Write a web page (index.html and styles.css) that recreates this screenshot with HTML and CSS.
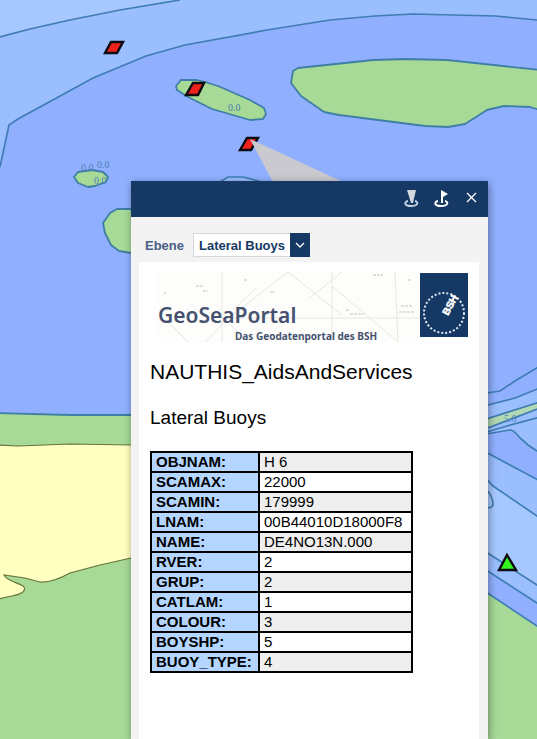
FILE: index.html
```html
<!DOCTYPE html>
<html lang="de">
<head>
    <meta charset="UTF-8">
    <meta name="viewport" content="width=device-width, initial-scale=1.0">
    <title>GeoSeaPortal</title>
    <link rel="stylesheet" href="styles.css">
</head>
<body>
    <main class="map">
        <svg class="chart" viewBox="0 0 537 739" preserveAspectRatio="xMinYMin slice" aria-hidden="true">
            <!-- depth areas -->
            <rect class="deep" width="537" height="739"/>
            <path class="medium" d="M0 0H537V20L495 16L413 14L375 16L330 20L267 30L185 45L146 56L93 78L18 119L9 125L0 167Z"/>
            <path class="shallow" d="M0 0H180L120 10L70 20L30 29L0 37Z"/>
            <path class="line" d="M180 0L120 10L70 20L30 29L0 37"/>
            <path class="line" d="M537 20L495 16L413 14L375 16L330 20L267 30L185 45L146 56L93 78L18 119L9 125L0 167"/>

            <!-- drying areas -->
            <path class="drying" d="M176 86L181 80L197 80L205 82L218 86L250 100L264 108L266 114L263 119L250 120L212 109L188 97L177 90Z"/>
            <path class="drying" d="M291 83L293 71L298 68L373 60L405 59L447 60L540 70V110L530 107L504 106L487 110L465 124L448 127L425 126L339 115L324 112L301 96Z"/>
            <path class="drying" d="M74 177L78 172L92 170L103 172L108 177L106 182L95 186L88 187L78 183Z"/>
            <path class="drying" d="M140 209H117L110 213L103 223L105 233L111 245L119 251L131 253H140Z"/>
            <path class="medium line" d="M220 182L228 177L243 177L262 182"/>
            <path class="drying" d="M-2 413L70 415H200V745H-2Z"/>

            <!-- land -->
            <path class="land" d="M-2 445L18 446L70 444L131 445H140V556L131 558L100 565L70 573Q52 583 40 582L25 578L4 575C7 582 22 583 24 587Q27 593 12 596L-2 599Z"/>

            <!-- channel -->
            <path class="medium" d="M480 406L515 398L537 389V452L528 445L512 430L480 434Z"/>
            <path class="medium" d="M480 449L537 480V603L480 566Z"/>
            <path class="shallow" d="M480 473L493 486L537 517V585L480 548Z"/>
            <path class="drying-fill" d="M480 588L537 626V739H480Z"/>
            <path class="fairway" d="M480 421L540 402V408L480 431Z"/>
            <path class="line" d="M480 394L500 391L515 381L540 366M480 407L515 398L540 388M480 421L540 402M480 431L540 408M480 434L507 426L540 417M480 435L510 430Q514 430 520 438L528 445L540 453"/>
            <path class="line" d="M480 449L540 481M480 472L493 486L540 518M486 489Q493 496 493 505Q492 508 486 508M480 548L540 587M480 566L540 605M480 588L540 628"/>

            <g class="sounding">
                <text x="228" y="111">0.0</text>
                <text x="81" y="171">0.0</text>
                <text x="97" y="168">0.0</text>
                <text x="94" y="184">0.0</text>
                <text x="504" y="422">5.0</text>
            </g>

            <!-- buoys -->
            <path class="buoy" d="M105 53L111 42H123L117 53Z"/>
            <path class="buoy" d="M186 95L193 83H204L198 95Z"/>
            <path class="buoy" d="M240 150L247 138H258L251 150Z"/>
            <path class="buoy buoy-green" d="M507 555L516 570H499Z"/>

            <path class="callout" d="M250 139L343 182H273Z"/>
        </svg>

        <section class="popup">
            <header class="popup-header">
                <button class="icon-btn" type="button" aria-label="Pin">
                    <svg width="16" height="20" viewBox="0 0 16 20">
                        <path class="pin" d="M4 1H13L10 14H8Z"/>
                        <path class="ring pin-ring" d="M5 12C1 13 1 17 8 17S16 13 12 12"/>
                    </svg>
                </button>
                <button class="icon-btn" type="button" aria-label="Flag">
                    <svg width="16" height="20" viewBox="0 0 16 20">
                        <path class="flag" d="M8 1L15 5L10 8V14H8Z"/>
                        <path class="ring" d="M5 12C1 13 1 17 8 17S16 13 12 12"/>
                    </svg>
                </button>
                <button class="icon-btn" type="button" aria-label="Close">
                    <svg width="16" height="20" viewBox="0 0 16 20">
                        <path class="cross" d="M4 4L13 13M13 4L4 13"/>
                    </svg>
                </button>
            </header>

            <div class="layer-row">
                <label for="layer">Ebene</label>
                <div class="select-box">
                    <select id="layer">
                        <option>Lateral Buoys</option>
                    </select>
                    <svg class="arrow" viewBox="0 0 20 24" aria-hidden="true">
                        <path d="M6 10L10 14L14 10"/>
                    </svg>
                </div>
            </div>

            <div class="content">
                <div class="banner">
                    <svg class="banner-chart" viewBox="0 0 262 70" preserveAspectRatio="none" aria-hidden="true">
                        <rect width="262" height="70"/>
                        <path d="M64 0V70M174 0V70M237 0L240 70M64 46H262M64 51L130 0L184 43M10 50L30 70M48 70L64 52M72 52L90 70M150 27L184 0M174 14L240 70M98 16L75 38"/>
                        <path class="specks" d="M6 21h2M38 14h8M45 19h5M86 8h4M112 20h5M215 3h10M192 42h14M188 38h3M243 34h12M241 40h15M250 8h4"/>
                    </svg>
                    <div class="banner-text">
                        <div class="banner-title">GeoSeaPortal</div>
                        <div class="banner-subtitle">Das Geodatenportal des BSH</div>
                    </div>
                    <svg class="logo" width="48" height="64" viewBox="0 0 48 64" role="img" aria-label="BSH">
                        <rect width="48" height="64"/>
                        <circle cx="24" cy="40" r="20"/>
                        <text x="28" y="43" transform="rotate(-62 28 43)">BSH</text>
                    </svg>
                </div>

                <h1>NAUTHIS_AidsAndServices</h1>
                <h2>Lateral Buoys</h2>

                <table>
                    <tbody>
                        <tr><th scope="row">OBJNAM:</th><td>H 6</td></tr>
                        <tr><th scope="row">SCAMAX:</th><td>22000</td></tr>
                        <tr><th scope="row">SCAMIN:</th><td>179999</td></tr>
                        <tr><th scope="row">LNAM:</th><td>00B44010D18000F8</td></tr>
                        <tr><th scope="row">NAME:</th><td>DE4NO13N.000</td></tr>
                        <tr><th scope="row">RVER:</th><td>2</td></tr>
                        <tr><th scope="row">GRUP:</th><td>2</td></tr>
                        <tr><th scope="row">CATLAM:</th><td>1</td></tr>
                        <tr><th scope="row">COLOUR:</th><td>3</td></tr>
                        <tr><th scope="row">BOYSHP:</th><td>5</td></tr>
                        <tr><th scope="row">BUOY_TYPE:</th><td>4</td></tr>
                    </tbody>
                </table>
            </div>
        </section>
    </main>
</body>
</html>
```

FILE: styles.css
```css
* {
    box-sizing: border-box;
}

body {
    margin: 0;
    font-family: "Liberation Sans", Arial, sans-serif;
    color: #000;
}

.map {
    position: relative;
    height: 100vh;
    overflow: hidden;
}

/* chart */
.chart {
    position: absolute;
    width: 100%;
    height: 100%;
}

.deep {
    fill: #90b0ff;
}

.medium {
    fill: #9bbeff;
}

.shallow {
    fill: #a6c8ff;
}

.line {
    stroke: #3f7db3;
    stroke-width: 1.7;
}

.line:not(.medium) {
    fill: none;
}

.drying {
    fill: #a7d997;
    stroke: #3f7fa5;
    stroke-width: 1.8;
    stroke-linejoin: round;
}

.drying-fill {
    fill: #a7d997;
}

.land {
    fill: #ffffbf;
    stroke: #66733c;
    stroke-width: 1.2;
}

.fairway {
    fill: #b2d8b4;
}

.sounding {
    font-family: "Liberation Serif", serif;
    font-size: 10px;
    fill: #4d7fb5;
}

.buoy {
    fill: #ee221c;
    stroke: #0b0b10;
    stroke-width: 2.4;
}

.buoy-green {
    fill: #35f51f;
}

.callout {
    fill: #cac9d0;
}

/* popup */
.popup {
    position: absolute;
    top: 181px;
    bottom: 0;
    left: 131px;
    right: 49px;
    display: flex;
    flex-direction: column;
    background: #f3f3f3;
    box-shadow: 1px 2px 8px rgba(0, 0, 0, 0.4);
}

.popup-header {
    display: flex;
    justify-content: flex-end;
    align-items: center;
    flex-shrink: 0;
    height: 36px;
    padding-right: 2px;
    background: #153964;
}

.icon-btn {
    display: flex;
    justify-content: center;
    align-items: center;
    width: 30px;
    height: 32px;
    padding: 0;
    border: none;
    background: none;
    cursor: pointer;
}

.pin {
    fill: #d3d7de;
}

.flag {
    fill: #fff;
}

.ring {
    fill: none;
    stroke: #fff;
    stroke-width: 2;
}

.pin-ring {
    stroke: #c3cfe4;
}

.cross {
    stroke: #fff;
    stroke-width: 1.3;
}

.layer-row {
    display: flex;
    align-items: center;
    gap: 9px;
    padding: 16px 14px 5px;
    font-size: 13px;
    font-weight: bold;
}

.layer-row label {
    color: #4c5c84;
}

.select-box {
    position: relative;
    display: flex;
}

.select-box select {
    width: 117px;
    height: 24px;
    padding: 0 20px 0 5px;
    border: 1px solid #d5d9df;
    border-radius: 0;
    appearance: none;
    background: #fff;
    color: #153964;
    font: inherit;
}

.arrow {
    position: absolute;
    top: 0;
    right: 0;
    width: 20px;
    height: 24px;
    background: #153964;
    pointer-events: none;
}

.arrow path {
    fill: none;
    stroke: #fff;
    stroke-width: 1.3;
}

.content {
    flex: 1;
    margin: 0 9px 0 8px;
    padding: 10px 11px;
    background: #fff;
}

/* banner */
.banner {
    position: relative;
    display: flex;
    justify-content: space-between;
    height: 70px;
    margin-left: 8px;
}

.banner-chart {
    position: absolute;
    width: 262px;
    height: 70px;
}

.banner-chart rect {
    fill: #fdfdfb;
}

.banner-chart path {
    fill: none;
    stroke: #e6e6e1;
}

.banner-chart .specks {
    stroke: #e0e1d2;
    stroke-width: 2;
    stroke-dasharray: 3 1;
}

.banner-text {
    position: relative;
    padding-top: 29px;
    color: #45526f;
    font-family: "Noto Sans", sans-serif;
}

.banner-title {
    font-size: 21px;
    font-weight: 600;
    line-height: 28px;
}

.banner-subtitle {
    padding-left: 77px;
    font-size: 10px;
    font-weight: bold;
    line-height: 14px;
    white-space: nowrap;
}

.logo {
    margin-top: 1px;
}

.logo rect {
    fill: #153964;
}

.logo circle {
    fill: none;
    stroke: #dfe8f2;
    stroke-width: 2;
    stroke-dasharray: 2 2;
}

.logo text {
    fill: #fff;
    stroke: #fff;
    stroke-width: 0.6;
    font-size: 10px;
    font-weight: bold;
}

h1 {
    margin: 17px 0 0;
    font-size: 21px;
    font-weight: normal;
    line-height: 26px;
}

h2 {
    margin: 22px 0;
    font-size: 19px;
    font-weight: normal;
    line-height: 22px;
}

table {
    border-collapse: collapse;
    border: 2px solid #000;
    font-size: 15px;
    line-height: 18px;
}

th,
td {
    height: 20px;
    padding: 0 4px;
    border: 2px solid #000;
    text-align: left;
}

th {
    width: 108px;
    background: #b3d5ff;
}

td {
    width: 153px;
}

tr:nth-child(odd) td {
    background: #eee;
}
```
